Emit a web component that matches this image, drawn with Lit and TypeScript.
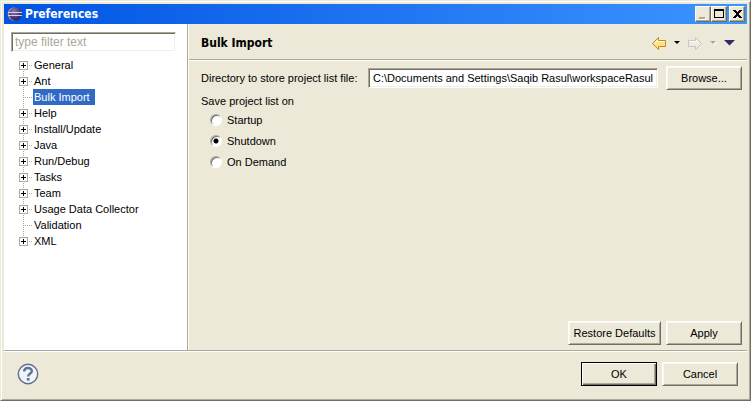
import { LitElement, html, css, svg, nothing } from "lit";
import { customElement, property, state } from "lit/decorators.js";
import { classMap } from "lit/directives/class-map.js";

const controls = css`
  * {
    box-sizing: border-box;
  }
  button,
  input {
    font: inherit;
    color: inherit;
    margin: 0;
    border-radius: 0;
  }
  .push {
    width: 76px;
    height: 24px;
    padding: 0;
    background: #ece9d8;
    border: 1px solid;
    border-color: #fff #716f64 #716f64 #fff;
    box-shadow: inset 1px 1px #f8f7f1, inset -1px -1px #aca899;
    white-space: nowrap;
  }
  .push.wide {
    width: 93px;
  }
  .push.default {
    border-color: #000;
    box-shadow: inset 1px 1px #fff, inset -1px -1px #716f64, inset -2px -2px #aca899;
  }
  .field {
    height: 20px;
    padding: 0 4px;
    background: #fff;
    border: 1px solid;
    border-color: #aca899 #fff #fff #aca899;
    box-shadow: inset 1px 1px #716f64, inset -1px -1px #f1efe2;
    outline: none;
    min-width: 0;
  }
`;

@customElement("title-bar")
class TitleBar extends LitElement {
  static styles = [
    controls,
    css`
      :host {
        display: flex;
        align-items: center;
        height: 20px;
        padding: 0 2px 0 3px;
        background: linear-gradient(to right, #0054e3, #3d95ff);
        color: #fff;
        font: bold 12px/20px "DejaVu Sans Condensed", "DejaVu Sans", sans-serif;
      }
      .name {
        flex: 1;
        margin: 0 0 0 2px;
        font: inherit;
      }
      .box {
        display: block;
        width: 16px;
        height: 16px;
        padding: 0;
        background: #ece9d8;
        border: 1px solid;
        border-color: #fff #716f64 #716f64 #fff;
        box-shadow: inset -1px -1px #aca899;
      }
      .close {
        margin-left: 2px;
      }
      svg {
        display: block;
      }
    `,
  ];
  render() {
    return html`
      <svg width="16" height="16" viewBox="0 0 16 16" aria-hidden="true">
        <defs>
          <radialGradient id="ball" cx="0.4" cy="0.3" r="0.7">
            <stop offset="0" stop-color="#8a78b8" />
            <stop offset="1" stop-color="#2c2255" />
          </radialGradient>
        </defs>
        <ellipse cx="6.5" cy="8" rx="5.8" ry="6.4" fill="#c98a8c" />
        <circle cx="8.4" cy="8" r="6.4" fill="url(#ball)" />
        <path d="M1 6.5h14M1 9.5h14" stroke="#d5cfe8" stroke-width="1" />
      </svg>
      <h1 class="name">Preferences</h1>
      <button class="box" aria-label="Minimize" disabled>
        <svg width="14" height="14" shape-rendering="crispEdges">
          <path d="M4 11h6v2H4z" fill="#fff" />
          <path d="M3 10h6v2H3z" fill="#aca899" />
        </svg>
      </button>
      <button class="box" aria-label="Maximize">
        <svg width="14" height="14" shape-rendering="crispEdges">
          <path d="M2 2h10v9H2zM3 4v6h8V4z" fill="#000" fill-rule="evenodd" />
        </svg>
      </button>
      <button class="box close" aria-label="Close">
        <svg width="14" height="14" shape-rendering="crispEdges">
          <path
            d="M3 3h3v1h1v1h1V4h1V3h3v1h-1v1h-1v1H9v2h1v1h1v1h1v1H9v-1H8V9H7v1H6v1H3v-1h1V9h1V8h1V6H5V5H4V4H3z"
            fill="#000"
          />
        </svg>
      </button>
    `;
  }
}

interface Page {
  name: string;
  children: boolean;
}

const PAGES: Page[] = [
  { name: "General", children: true },
  { name: "Ant", children: true },
  { name: "Bulk Import", children: false },
  { name: "Help", children: true },
  { name: "Install/Update", children: true },
  { name: "Java", children: true },
  { name: "Run/Debug", children: true },
  { name: "Tasks", children: true },
  { name: "Team", children: true },
  { name: "Usage Data Collector", children: true },
  { name: "Validation", children: false },
  { name: "XML", children: true },
];

@customElement("page-tree")
class PageTree extends LitElement {
  @property() selected = "Bulk Import";

  static styles = [
    controls,
    css`
      :host {
        display: flex;
        flex-direction: column;
        padding: 8px 11px 8px 7px;
        background: #fff;
      }
      .field::placeholder {
        color: #aca899;
        opacity: 1;
      }
      .filter {
        padding: 0 3px;
        font-size: 12px;
      }
      .tree {
        list-style: none;
        margin: 5px 0 0;
        padding: 0 0 0 8px;
      }
      .row {
        display: flex;
        align-items: center;
        height: 16px;
        background: repeating-linear-gradient(#aca899 0 1px, #fff 1px 2px) 4px 0 / 1px 16px
          no-repeat;
      }
      .row:first-child {
        background-position: 4px 8px;
      }
      .row:last-child {
        background-size: 1px 8px;
      }
      .toggle {
        flex: none;
        width: 9px;
        height: 9px;
        padding: 0;
        border: 1px solid #aca899;
        background: linear-gradient(#000, #000) center / 5px 1px no-repeat,
          linear-gradient(#000, #000) center / 1px 5px no-repeat, #fff;
      }
      .twig {
        flex: none;
        width: 5px;
        height: 1px;
        background: repeating-linear-gradient(to right, #fff 0 1px, #aca899 1px 2px);
      }
      .leaf {
        width: 9px;
        margin-left: 5px;
      }
      .name {
        height: 16px;
        padding: 0 5px 0 1px;
        border: 0;
        background: none;
        line-height: 16px;
        white-space: nowrap;
      }
      .picked {
        background: #316ac5;
        color: #fff;
      }
    `,
  ];

  render() {
    return html`
      <input class="field filter" type="text" placeholder="type filter text" aria-label="Filter" />
      <ul class="tree">
        ${PAGES.map(
          (p) => html`<li class="row">
            ${p.children
              ? html`<button class="toggle" aria-label="Expand ${p.name}"></button>`
              : nothing}
            <span class=${classMap({ twig: true, leaf: !p.children })}></span>
            <button
              class=${classMap({ name: true, picked: p.name === this.selected })}
              @click=${() => (this.selected = p.name)}
            >
              ${p.name}
            </button>
          </li>`
        )}
      </ul>
    `;
  }
}

const arrow = (outline: string, fill: string, light: string) => svg`
  <path d="M0.5 6.5 6.5 0.5V3.5H13.5V9.5H6.5V12.5z"
    fill=${fill} stroke=${outline} stroke-width="1" stroke-linejoin="round" />
  <path d="M2.5 6.5 5.5 3.5V4.5H12.5" fill="none" stroke=${light} stroke-width="1" />`;

@customElement("import-page")
class ImportPage extends LitElement {
  @state() private saveOn = "Shutdown";

  static styles = [
    controls,
    css`
      :host {
        display: flex;
        flex-direction: column;
      }
      .header {
        display: flex;
        align-items: center;
        height: 36px;
        padding: 3px 12px 0 12px;
        border-bottom: 1px solid #aca899;
        box-shadow: 0 1px #fff;
      }
      .title {
        flex: 1;
        margin: 0;
        font: bold 12px/16px "DejaVu Sans Condensed", "DejaVu Sans", sans-serif;
      }
      .nav {
        display: flex;
        align-items: center;
        gap: 7px;
      }
      .icon {
        display: block;
        padding: 0;
        border: 0;
        background: none;
      }
      .icon svg {
        display: block;
      }
      .body {
        flex: 1;
        display: flex;
        flex-direction: column;
        padding: 6px 5px 5px 12px;
      }
      .path {
        display: flex;
        align-items: center;
        gap: 8px;
      }
      .caption {
        flex: 0 0 159px;
        white-space: nowrap;
      }
      .path .field {
        flex: 1;
      }
      .group {
        margin: 3px 0 0;
        padding: 0;
        border: 0;
      }
      .legend {
        padding: 0;
        line-height: 16px;
      }
      .choice {
        display: flex;
        align-items: center;
        gap: 5px;
        height: 21px;
        width: max-content;
        padding-left: 9px;
      }
      .radio {
        appearance: none;
        width: 12px;
        height: 12px;
        border-radius: 50%;
        border: 1px solid;
        border-color: #aca899 #fff #fff #aca899;
        background: #fff;
        box-shadow: inset 1px 1px #716f64;
      }
      .radio:checked {
        background: radial-gradient(circle at 5px 5px, #000 2px, #fff 3px);
      }
      .actions {
        display: flex;
        justify-content: flex-end;
        gap: 5px;
        margin-top: auto;
      }
    `,
  ];

  render() {
    return html`
      <header class="header">
        <h2 class="title">Bulk Import</h2>
        <nav class="nav" aria-label="History">
          <button class="icon" aria-label="Back">
            <svg width="14" height="13" viewBox="0 0 14 13">
              ${arrow("#c68a1c", "#ffe08a", "#fffbe0")}
            </svg>
          </button>
          <button class="icon" aria-label="Back history">
            <svg width="8" height="6"><path d="M1 1h6L4 4z" fill="#000" /></svg>
          </button>
          <button class="icon" aria-label="Forward" disabled>
            <svg width="14" height="13" viewBox="0 0 14 13">
              <g transform="matrix(-1 0 0 1 14 0)">${arrow("#c6c5bf", "#ecebe6", "#fbfbf8")}</g>
            </svg>
          </button>
          <button class="icon" aria-label="Forward history" disabled>
            <svg width="8" height="6">
              <path d="M2 2h6L5 5z" fill="#fff" />
              <path d="M1 1h6L4 4z" fill="#aca899" />
            </svg>
          </button>
          <button class="icon" aria-label="Menu">
            <svg width="11" height="6"><path d="M0 0h11L5.5 5.5z" fill="#2f2a6b" /></svg>
          </button>
        </nav>
      </header>
      <div class="body">
        <div class="path">
          <label class="caption" for="dir">Directory to store project list file:</label>
          <input
            class="field"
            id="dir"
            type="text"
            value="C:\\Documents and Settings\\Saqib Rasul\\workspaceRasul"
          />
          <button class="push">Browse...</button>
        </div>
        <fieldset class="group">
          <legend class="legend">Save project list on</legend>
          ${["Startup", "Shutdown", "On Demand"].map(
            (name) => html`<label class="choice">
              <input
                class="radio"
                type="radio"
                name="save"
                .checked=${this.saveOn === name}
                @change=${() => (this.saveOn = name)}
              />
              ${name}
            </label>`
          )}
        </fieldset>
        <div class="actions">
          <button class="push wide">Restore Defaults</button>
          <button class="push">Apply</button>
        </div>
      </div>
    `;
  }
}

@customElement("app-root")
class AppRoot extends LitElement {
  static styles = [
    controls,
    css`
      :host {
        display: flex;
        flex-direction: column;
        box-sizing: border-box;
        min-height: 100vh;
        padding: 2px;
        background: #ece9d8;
        border: 1px solid;
        border-color: #ece9d8 #716f64 #716f64 #ece9d8;
        box-shadow: inset 1px 1px #fff, inset -1px -1px #aca899;
        color: #000;
        font: 11px/14px "Liberation Sans", Arial, sans-serif;
      }
      .window {
        flex: 1;
        display: flex;
        flex-direction: column;
        padding: 1px;
      }
      .main {
        flex: 1;
        display: grid;
        grid-template-columns: 184px 1fr;
        border-bottom: 1px solid #aca899;
      }
      .side {
        border-right: 1px solid #aca899;
      }
      .content {
        border-left: 1px solid #fff;
      }
      .footer {
        display: flex;
        align-items: center;
        gap: 5px;
        height: 46px;
        padding: 0 9px 2px 13px;
        border-top: 1px solid #fff;
      }
      .help {
        margin-right: auto;
        padding: 0;
        border: 0;
        background: none;
      }
      .help svg {
        display: block;
      }
    `,
  ];

  render() {
    return html`
      <div class="window">
        <title-bar></title-bar>
        <main class="main">
          <page-tree class="side"></page-tree>
          <import-page class="content"></import-page>
        </main>
        <footer class="footer">
          <button class="help" aria-label="Help">
            <svg width="22" height="22" viewBox="0 0 22 22">
              <circle cx="11" cy="11" r="9.7" fill="#f3f4f8" stroke="#5f7090" stroke-width="1.4" />
              <path
                d="M7.2 8.6C7.2 4 14.8 4 14.8 8.1c0 2.7-3.6 2.7-3.6 5.3"
                fill="none"
                stroke="#60739b"
                stroke-width="2.5"
              />
              <path d="M9.8 15h2.8v2.6H9.8z" fill="#60739b" />
            </svg>
          </button>
          <button class="push default">OK</button>
          <button class="push">Cancel</button>
        </footer>
      </div>
    `;
  }
}
